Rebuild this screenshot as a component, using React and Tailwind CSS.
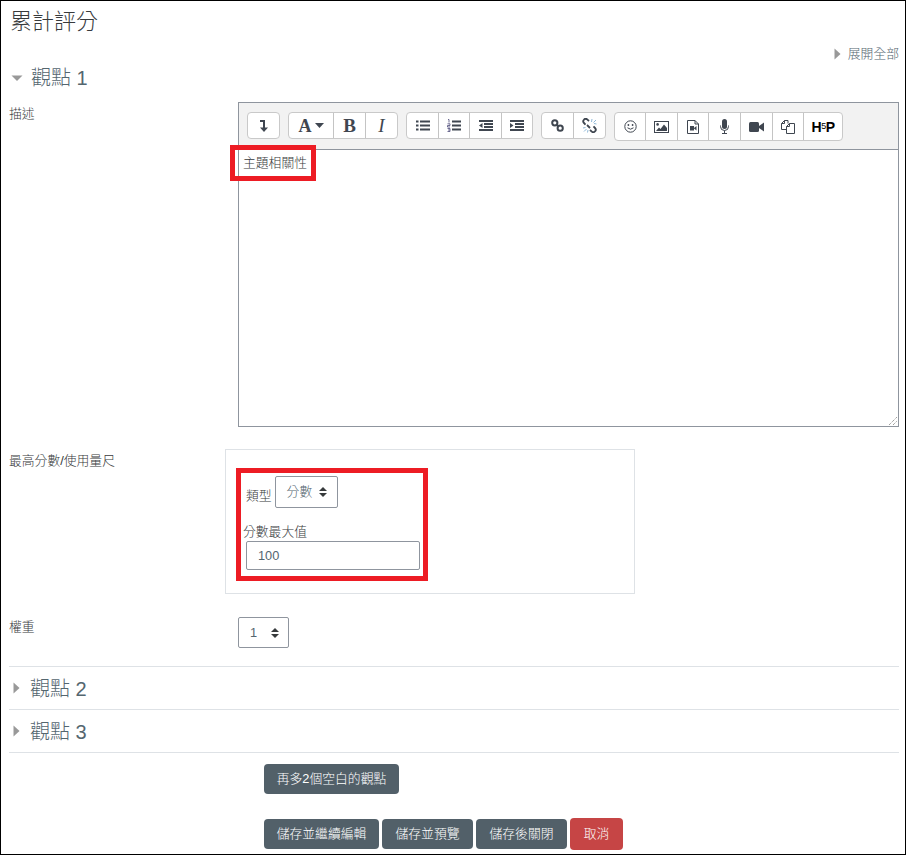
import React from "react";

const FONT = { fontFamily: '"Liberation Sans", "Noto Sans CJK TC", sans-serif' };
const INK = "#3f4650";

function Right() {
  return (
    <svg width="7" height="12" viewBox="0 0 7 12" className="shrink-0">
      <path d="M0.5 0.5 L6.5 6 L0.5 11.5 Z" fill="#999" />
    </svg>
  );
}
function Down() {
  return (
    <svg width="12" height="7" viewBox="0 0 12 7" className="shrink-0">
      <path d="M0.5 0.5 L11.5 0.5 L6 6 Z" fill="#999" />
    </svg>
  );
}
function UpDown() {
  return (
    <svg width="8" height="10" viewBox="0 0 8 10" className="shrink-0">
      <path d="M4 0 L8 4 L0 4 Z M4 10 L0 6 L8 6 Z" fill="#373a3c" />
    </svg>
  );
}
function Btn({ w, children, last }) {
  return (
    <div className={`flex items-center justify-center text-[#4a5058] ${last ? "" : "border-r border-[#c4c4c4]"} ${w}`}>
      {children}
    </div>
  );
}
function Group({ children, h = "h-[27px]" }) {
  return (
    <div className={`flex ${h} bg-white border border-[#c9c9c9] rounded-[4px]`}>{children}</div>
  );
}
function Section({ n }) {
  return (
    <div className="h-[43px] border-b border-[#dee2e6] flex items-center pl-[4px] gap-[10px]">
      <Right />
      <span className="text-[20px] text-[#54666f] leading-none pt-[2px]">觀點 {n}</span>
    </div>
  );
}
function ActionBtn({ children, w, red }) {
  return (
    <button className={`${w} ${red ? "h-[32px] bg-[#c64545]" : "h-[30px] bg-[#526069]"} rounded-[4px] text-white text-[12.8px] flex items-center justify-center`}>
      {children}
    </button>
  );
}

const IconCollapse = () => (
  <svg width="10" height="12" viewBox="0 0 10 12">
    <path d="M1 1 H5 V8" fill="none" stroke={INK} strokeWidth="2" />
    <path d="M1 7.5 H9 L5 12 Z" fill={INK} />
  </svg>
);
const IconUl = () => (
  <svg width="14" height="11" viewBox="0 0 14 11">
    <path d="M4 1.5 H14 M4 5.5 H14 M4 9.5 H14" stroke={INK} strokeWidth="2" />
    <path d="M0 0.5 H2.5 V2.5 H0 Z M0 4.5 H2.5 V6.5 H0 Z M0 8.5 H2.5 V10.5 H0 Z" fill={INK} />
  </svg>
);
const IconOl = () => (
  <svg width="14" height="13" viewBox="0 0 14 13">
    <path d="M5 2.5 H14 M5 6.5 H14 M5 10.5 H14" stroke={INK} strokeWidth="2" />
    <path d="M1 0.5 H2 V3.5 M0.5 4.8 H3 V6.5 H0.5 V8 H3 M0.5 9.5 H3 V12.5 H0.5 M1 11 H3" stroke="#4b4a78" strokeWidth="0.8" fill="none" />
  </svg>
);
const IconOutdent = () => (
  <svg width="14" height="11" viewBox="0 0 14 11">
    <path d="M0 1 H14 M0 10 H14 M5 4 H14 M5 7 H14" stroke={INK} strokeWidth="2" />
    <path d="M3.5 3 V8 L0 5.5 Z" fill={INK} />
  </svg>
);
const IconIndent = () => (
  <svg width="14" height="11" viewBox="0 0 14 11">
    <path d="M0 1 H14 M0 10 H14 M5 4 H14 M5 7 H14" stroke={INK} strokeWidth="2" />
    <path d="M0 3 V8 L3.5 5.5 Z" fill={INK} />
  </svg>
);
const IconLink = () => (
  <svg width="13" height="13" viewBox="0 0 13 13">
    <g fill="none" stroke={INK} strokeWidth="2">
      <ellipse cx="3.8" cy="3.8" rx="2.6" ry="2.6" />
      <ellipse cx="9.2" cy="9.2" rx="2.6" ry="2.6" />
      <path d="M5.5 5.5 L7.5 7.5" />
    </g>
  </svg>
);
const IconUnlink = () => (
  <svg width="15" height="15" viewBox="0 0 15 15">
    <g fill="none" stroke={INK} strokeWidth="1.8">
      <path d="M7 3 L5.5 1.6 A2.4 2.4 0 0 0 2 5 L3.5 6.6" />
      <path d="M8 12 L9.5 13.4 A2.4 2.4 0 0 0 13 10 L11.5 8.4" />
      <path d="M5 7 L8 10" />
    </g>
    <path d="M10 1 L9.5 4 M14 2 L11.5 4.5 M14.5 6 L12 5.5 M1 10 L3.5 9.5 M2 13.5 L4.5 11 M5.5 14.5 L6 12" stroke="#8fb8d8" strokeWidth="1" />
  </svg>
);
const IconSmile = () => (
  <svg width="13" height="13" viewBox="0 0 13 13">
    <circle cx="6.5" cy="6.5" r="5.7" fill="none" stroke={INK} strokeWidth="1" />
    <circle cx="4.4" cy="5" r="0.9" fill={INK} />
    <circle cx="8.6" cy="5" r="0.9" fill={INK} />
    <path d="M3.5 7.8 Q6.5 10.6 9.5 7.8" fill="none" stroke={INK} strokeWidth="1" />
  </svg>
);
const IconImage = () => (
  <svg width="15" height="12" viewBox="0 0 15 12">
    <rect x="0.5" y="0.5" width="14" height="11" fill="none" stroke={INK} strokeWidth="1" />
    <circle cx="3.6" cy="3.4" r="1.3" fill={INK} />
    <path d="M2 10 L5 6.5 L6.5 8 L10 3.5 L13 7 V10 Z" fill={INK} />
  </svg>
);
const IconFileVideo = () => (
  <svg width="12" height="14" viewBox="0 0 12 14">
    <path d="M0.5 0.5 H8 L11.5 4 V13.5 H0.5 Z M8 0.5 V4 H11.5" fill="none" stroke={INK} strokeWidth="1" />
    <rect x="3" y="6" width="4" height="4.5" fill={INK} />
    <path d="M7 8 L9.5 6 V10.5 L7 8.5 Z" fill={INK} />
  </svg>
);
const IconMic = () => (
  <svg width="9" height="15" viewBox="0 0 9 15">
    <rect x="2" y="0" width="5" height="10" rx="2.5" fill={INK} />
    <path d="M0.5 6.5 V7.5 A4 4 0 0 0 8.5 7.5 V6.5 M4.5 11.5 V14 M2 14.5 H7" fill="none" stroke={INK} strokeWidth="1" />
  </svg>
);
const IconVideo = () => (
  <svg width="15" height="10" viewBox="0 0 15 10">
    <rect x="0" y="0" width="10" height="10" rx="1.5" fill={INK} />
    <path d="M10 4 L15 0.5 V9.5 L10 6 Z" fill={INK} />
  </svg>
);
const IconCopy = () => (
  <svg width="14" height="14" viewBox="0 0 14 14">
    <path d="M7 3.5 V0.5 H3.5 L0.5 3.5 V9.5 H5.5" fill="none" stroke={INK} strokeWidth="1" />
    <path d="M3.5 0.5 V3.5 H0.5" fill="none" stroke={INK} strokeWidth="1" />
    <path d="M5.5 13.5 V6.5 L8.5 3.5 H13.5 V13.5 Z M8.5 3.5 V6.5 H5.5" fill="white" stroke={INK} strokeWidth="1" />
  </svg>
);

const SERIF = { fontFamily: '"Liberation Serif", serif' };

export default function App() {
  return (
    <div style={FONT} className="relative w-[906px] h-[855px] border border-black bg-white overflow-hidden pl-[8px] pr-[6px] text-[12.8px] font-light text-[#373a3c]">
      <h2 className="text-[22px] font-light leading-[30px] mt-[6px] ml-[1px] text-[#373a3c]">累計評分</h2>
      <div className="flex justify-end items-center gap-[7px] mt-[9px] h-[16px] text-[#54666f]">
        <Right />
        <span>展開全部</span>
      </div>
      <div className="flex items-center gap-[8px] ml-[2px] mt-[4px] h-[24px]">
        <Down />
        <span className="text-[20px] text-[#54666f] leading-none">觀點 1</span>
      </div>

      <div className="flex mt-[12px]">
        <div className="w-[229px] pt-[2px]">描述</div>
        <div className="w-[661px] h-[325px] border border-[#8f959e] flex flex-col relative">
          <div className="h-[47px] bg-[#f2f2f2] border-b border-[#8f959e] flex items-start pt-[9px] pl-[8px] gap-[8px] shrink-0">
            <Group>
              <Btn w="w-[31px]" last><IconCollapse /></Btn>
            </Group>
            <Group>
              <Btn w="w-[45px] gap-[3px]">
                <span className="font-bold text-[18px] leading-none text-[#3f4650]" style={SERIF}>A</span>
                <svg width="9" height="5" viewBox="0 0 9 5"><path d="M0 0 H9 L4.5 5 Z" fill={INK} /></svg>
              </Btn>
              <Btn w="w-[32px]">
                <span className="font-bold text-[19px] leading-none text-[#3f4650]" style={SERIF}>B</span>
              </Btn>
              <Btn w="w-[31px]" last>
                <span className="italic text-[19px] leading-none text-[#3f4650]" style={SERIF}>I</span>
              </Btn>
            </Group>
            <Group>
              <Btn w="w-[32px]"><IconUl /></Btn>
              <Btn w="w-[31px]"><IconOl /></Btn>
              <Btn w="w-[32px]"><IconOutdent /></Btn>
              <Btn w="w-[30px]" last><IconIndent /></Btn>
            </Group>
            <Group>
              <Btn w="w-[32px]"><IconLink /></Btn>
              <Btn w="w-[31px]" last><IconUnlink /></Btn>
            </Group>
            <Group h="h-[29px]">
              <Btn w="w-[31px]"><IconSmile /></Btn>
              <Btn w="w-[32px]"><IconImage /></Btn>
              <Btn w="w-[31px]"><IconFileVideo /></Btn>
              <Btn w="w-[32px]"><IconMic /></Btn>
              <Btn w="w-[32px]"><IconVideo /></Btn>
              <Btn w="w-[31px]"><IconCopy /></Btn>
              <Btn w="w-[38px]" last>
                <span className="font-bold text-[14px] leading-none text-black flex items-center tracking-[-0.5px]">
                  H<span className="text-[9px] font-normal">5</span>P
                </span>
              </Btn>
            </Group>
          </div>
          <div className="pl-[4px] pt-[5px] leading-[16px]">主題相關性</div>
          <svg width="10" height="10" viewBox="0 0 10 10" className="absolute right-0 bottom-0">
            <path d="M1 9 L9 1 M5 9 L9 5" stroke="#777" strokeWidth="1" strokeDasharray="1 1" fill="none" />
          </svg>
        </div>
      </div>

      <div className="flex mt-[22px]">
        <div className="w-[216px] pt-[2px]">最高分數/使用量尺</div>
        <div className="w-[410px] h-[145px] border border-[#dee2e6] pl-[20px] pt-[26px]">
          <div className="flex items-end gap-[3px]">
            <span className="pb-[3px]">類型</span>
            <div className="w-[63px] h-[32px] border border-[#8f959e] rounded-[2px] flex items-center pl-[11px] gap-[7px] text-[#54666f] pb-0">
              分數 <UpDown />
            </div>
          </div>
          <div className="ml-[-3px] mt-[16px] leading-[16px]">分數最大值</div>
          <div className="w-[174px] h-[29px] border border-[#8f959e] rounded-[2px] flex items-center pl-[11px] text-[#54666f] mt-[1px]">100</div>
        </div>
      </div>

      <div className="flex mt-[23px]">
        <div className="w-[229px]">權重</div>
        <div className="w-[51px] h-[31px] border border-[#8f959e] rounded-[2px] flex items-center pl-[11px] gap-[14px] text-[#54666f]">
          1 <UpDown />
        </div>
      </div>

      <div className="mt-[18px] border-t border-[#dee2e6]">
        <Section n={2} />
        <Section n={3} />
      </div>

      <div className="ml-[255px] mt-[11px] flex">
        <ActionBtn w="w-[135px]">再多2個空白的觀點</ActionBtn>
      </div>
      <div className="ml-[255px] mt-[24px] flex items-center gap-[3px]">
        <ActionBtn w="w-[115px]">儲存並繼續編輯</ActionBtn>
        <ActionBtn w="w-[91px]">儲存並預覽</ActionBtn>
        <ActionBtn w="w-[91px]">儲存後關閉</ActionBtn>
        <ActionBtn w="w-[53px]" red>取消</ActionBtn>
      </div>

      <div className="absolute left-[229px] top-[144px] w-[86px] h-[36px] border-[5px] border-[#ed1c24]" />
      <div className="absolute left-[235px] top-[467px] w-[192px] h-[113px] border-[5px] border-[#ed1c24]" />
    </div>
  );
}
